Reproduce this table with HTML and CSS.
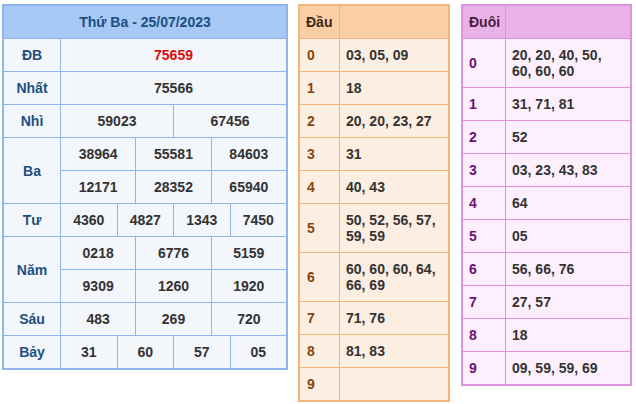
FILE: index.html
```html
<!DOCTYPE html>
<html lang="vi">
<head>
<meta charset="utf-8">
<title>KQXS Thứ Ba 25/07/2023</title>
<link rel="stylesheet" href="styles.css">
</head>
<body>
<div class="page">
  <div class="kq">
    <div class="kq-head">Thứ Ba - 25/07/2023</div>

    <div class="lbl">ĐB</div>
    <div class="val s12 db">75659</div>

    <div class="lbl">Nhất</div>
    <div class="val s12">75566</div>

    <div class="lbl">Nhì</div>
    <div class="val s6">59023</div>
    <div class="val s6">67456</div>

    <div class="lbl r2">Ba</div>
    <div class="val s4">38964</div>
    <div class="val s4">55581</div>
    <div class="val s4">84603</div>
    <div class="val s4">12171</div>
    <div class="val s4">28352</div>
    <div class="val s4">65940</div>

    <div class="lbl">Tư</div>
    <div class="val s3">4360</div>
    <div class="val s3">4827</div>
    <div class="val s3">1343</div>
    <div class="val s3">7450</div>

    <div class="lbl r2">Năm</div>
    <div class="val s4">0218</div>
    <div class="val s4">6776</div>
    <div class="val s4">5159</div>
    <div class="val s4">9309</div>
    <div class="val s4">1260</div>
    <div class="val s4">1920</div>

    <div class="lbl">Sáu</div>
    <div class="val s4">483</div>
    <div class="val s4">269</div>
    <div class="val s4">720</div>

    <div class="lbl">Bảy</div>
    <div class="val s3">31</div>
    <div class="val s3">60</div>
    <div class="val s3">57</div>
    <div class="val s3">05</div>
  </div>

  <div class="lt dau">
    <div class="h">Đầu</div><div class="h"></div>
    <div class="k">0</div><div class="v">03, 05, 09</div>
    <div class="k">1</div><div class="v">18</div>
    <div class="k">2</div><div class="v">20, 20, 23, 27</div>
    <div class="k">3</div><div class="v">31</div>
    <div class="k">4</div><div class="v">40, 43</div>
    <div class="k">5</div><div class="v">50, 52, 56, 57, 59, 59</div>
    <div class="k">6</div><div class="v">60, 60, 60, 64, 66, 69</div>
    <div class="k">7</div><div class="v">71, 76</div>
    <div class="k">8</div><div class="v">81, 83</div>
    <div class="k">9</div><div class="v"></div>
  </div>

  <div class="lt duoi">
    <div class="h">Đuôi</div><div class="h"></div>
    <div class="k">0</div><div class="v">20, 20, 40, 50, 60, 60, 60</div>
    <div class="k">1</div><div class="v">31, 71, 81</div>
    <div class="k">2</div><div class="v">52</div>
    <div class="k">3</div><div class="v">03, 23, 43, 83</div>
    <div class="k">4</div><div class="v">64</div>
    <div class="k">5</div><div class="v">05</div>
    <div class="k">6</div><div class="v">56, 66, 76</div>
    <div class="k">7</div><div class="v">27, 57</div>
    <div class="k">8</div><div class="v">18</div>
    <div class="k">9</div><div class="v">09, 59, 59, 69</div>
  </div>
</div>
</body>
</html>
```

FILE: styles.css
```css
* { box-sizing: border-box; }

html, body {
  margin: 0;
  padding: 0;
  background: #ffffff;
}

body {
  font-family: "Liberation Sans", Arial, sans-serif;
  font-size: 14px;
  font-weight: bold;
  color: #333333;
}

.page {
  display: flex;
  align-items: flex-start;
  padding: 4px 0 0 2px;
}

/* main results table */
.kq {
  width: 286px;
  display: grid;
  grid-template-columns: 56px repeat(12, 1fr);
  grid-auto-rows: 32px;
  gap: 1px;
  background: #8fb6ec;
  border: 2px solid #8fb6ec;
}

.kq > div {
  display: flex;
  align-items: center;
  justify-content: center;
  background: #f3f6fb;
}

.kq .kq-head {
  grid-column: 1 / -1;
  background: #a8c9f5;
  color: #1d4f80;
}

.kq .lbl {
  color: #1d4f80;
}

.kq .r2 { grid-row: span 2; }
.kq .s12 { grid-column: span 12; }
.kq .s6 { grid-column: span 6; }
.kq .s4 { grid-column: span 4; }
.kq .s3 { grid-column: span 3; }
.kq .db { color: #e00b0b; }

/* loto tables */
.lt {
  display: grid;
  gap: 1px;
  line-height: 16px;
}

.lt > div {
  padding: 8px 10px 8px 6px;
  min-height: 32px;
}

.lt .k {
  display: flex;
  align-items: center;
  padding-left: 7px;
}

.dau {
  margin-left: 10px;
  width: 152px;
  grid-template-columns: 39px 1fr;
  background: #f2b478;
  border: 2px solid #f2b478;
}

.dau > div { background: #fdeee2; }
.dau .h { background: #fbcfa5; color: #3b2816; }
.dau .k { color: #85460f; }

.duoi {
  margin-left: 11px;
  width: 171px;
  grid-template-columns: 42px 1fr;
  background: #df93df;
  border: 2px solid #df93df;
}

.duoi > div { background: #fdf0fc; }
.duoi .h { background: #e8b2e8; color: #4b1d3c; }
.duoi .k { color: #6a1276; padding-left: 6px; }
```
